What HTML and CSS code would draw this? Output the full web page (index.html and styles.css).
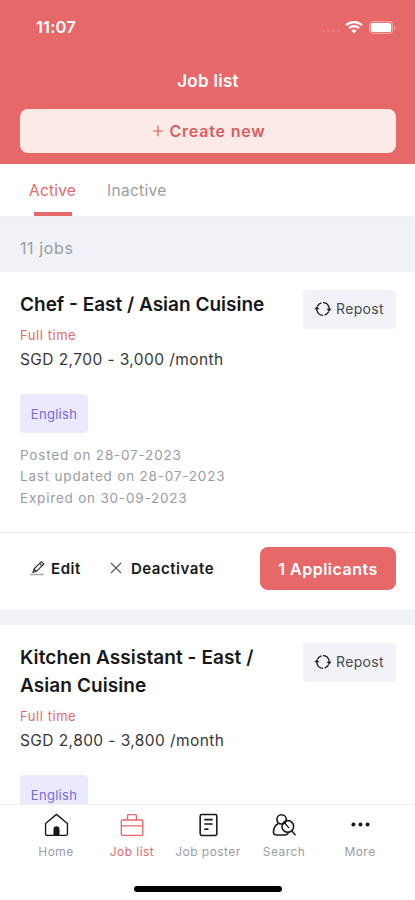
FILE: index.html
```
<!DOCTYPE html>
<html lang="en">
<head>
<meta charset="utf-8">
<meta name="viewport" content="width=device-width, initial-scale=1">
<title>Job list</title>
<link rel="stylesheet" href="styles.css">
</head>
<body>
<svg class="sprite" aria-hidden="true">
  <symbol id="repost" viewBox="0 0 18 18">
    <path d="M3.3 6.6A6.2 6.2 0 0 1 7.4 2.9M9 2.7A6.3 6.3 0 0 1 15 7.4L15.2 9M14.7 11.4A6.2 6.2 0 0 1 10.6 15.1M9 15.3A6.3 6.3 0 0 1 3 10.6L2.8 9" fill="none" stroke="currentColor" stroke-width="1.3"/>
    <path d="M.4 9.2L2.8 6.6L5.6 9.2ZM12.4 8.8H17.6L15.2 11.4Z" fill="currentColor"/>
  </symbol>
</svg>
<div class="screen">
  <header class="header">
    <div class="status">
      <span class="time">11:07</span>
      <span class="signals">
        <svg class="dots" viewBox="0 0 20 4"><path d="M1 2h3M6 2h3M11 2h3M16 2h3" stroke="#ee908e" stroke-width="1.2"/></svg>
        <svg class="wifi" viewBox="0 0 18 14"><path d="M1.2 5.2A11.2 11.2 0 0 1 16.8 5.2M4 8.2A7.2 7.2 0 0 1 14 8.2" fill="none" stroke="#fff" stroke-width="2.3"/><path d="M6.4 10.7A3.8 3.8 0 0 1 11.6 10.7L9 13.4Z" fill="#fff"/></svg>
        <svg class="battery" viewBox="0 0 27 13"><rect x=".6" y=".6" width="23" height="11.8" rx="3.4" fill="none" stroke="#f2a5a4" stroke-width="1.1"/><rect x="1.8" y="1.9" width="20.4" height="9.2" rx="1.8" fill="#fff"/><path d="M25 4.5Q26.5 5 26.5 6.5T25 8.5Z" fill="#f2a5a4"/></svg>
      </span>
    </div>
    <h1 class="title">Job list</h1>
    <button class="create"><svg viewBox="0 0 12 12"><path d="M6 .8V11.2M.8 6H11.2" stroke="currentColor" stroke-width="1.2"/></svg><span>Create new</span></button>
  </header>
  <nav class="tabs"><a class="tab tab-active">Active</a><a class="tab">Inactive</a></nav>
  <div class="count"><span>11 jobs</span></div>
  <main class="jobs">
    <article class="card">
      <div class="card-body">
        <div class="card-head">
          <h2 class="job-title"><span>Chef - East / Asian Cuisine</span></h2>
          <button class="repost"><svg><use href="#repost"/></svg><span>Repost</span></button>
        </div>
        <div class="type"><span>Full time</span></div>
        <div class="salary"><span>SGD 2,700 - 3,000 /month</span></div>
        <div class="tag"><span>English</span></div>
        <div class="dates">
          <div><span>Posted on 28-07-2023</span></div>
          <div><span>Last updated on 28-07-2023</span></div>
          <div><span>Expired on 30-09-2023</span></div>
        </div>
      </div>
      <footer class="actions">
        <button class="action edit"><svg viewBox="0 0 16 16"><path d="M2.8 12.6L4 9L11.4 1.6L13.8 4L6.4 11.4ZM9.6 3.4L12 5.8M4 9L6.4 11.4" fill="none" stroke="#333" stroke-width="1.1" stroke-linejoin="round"/><path d="M.2 14.5H13.6" stroke="#aaa" stroke-width="1.6"/></svg><span>Edit</span></button>
        <button class="action deactivate"><svg viewBox="0 0 12 12"><path d="M1 1L11 11M11 1L1 11" stroke="#555" stroke-width="1.1"/></svg><span>Deactivate</span></button>
        <button class="applicants"><span>1 Applicants</span></button>
      </footer>
    </article>
    <article class="card">
      <div class="card-body">
        <div class="card-head">
          <h2 class="job-title title-wide"><span>Kitchen Assistant - East /<br>Asian Cuisine</span></h2>
          <button class="repost"><svg><use href="#repost"/></svg><span>Repost</span></button>
        </div>
        <div class="type"><span>Full time</span></div>
        <div class="salary"><span>SGD 2,800 - 3,800 /month</span></div>
        <div class="tag"><span>English</span></div>
      </div>
    </article>
  </main>
  <footer class="bottom">
    <nav class="nav">
      <a class="nav-item"><svg viewBox="0 0 24 24"><path d="M1.5 10.5L12 1.8L22.5 10.5V20.5Q22.5 22 21 22H3Q1.5 22 1.5 20.5Z" fill="none" stroke="currentColor" stroke-width="1.3" stroke-linejoin="round"/><path d="M9.6 22V16.2A2.4 2.4 0 0 1 14.4 16.2V22Z" fill="currentColor" stroke="currentColor"/></svg><span>Home</span></a>
      <a class="nav-item nav-active"><svg viewBox="0 0 24 24"><path d="M2.4 7.2H20.8Q21.9 7.2 21.9 8.3V20.9Q21.9 22 20.8 22H2.4Q1.3 22 1.3 20.9V8.3Q1.3 7.2 2.4 7.2ZM1.3 12.8H21.9M7.2 7.2V3.2Q7.2 2.1 8.3 2.1H14.7Q15.8 2.1 15.8 3.2V7.2" fill="none" stroke="currentColor" stroke-width="1.3"/></svg><span>Job list</span></a>
      <a class="nav-item"><svg viewBox="0 0 24 24"><rect x="4" y="2" width="16" height="20" rx="1.5" fill="none" stroke="currentColor" stroke-width="1.5"/><path d="M8 6.8H16M8 11H16" stroke="currentColor" stroke-width="1.6"/><path d="M8 16H12" stroke="currentColor" stroke-width="1.6"/></svg><span>Job poster</span></a>
      <a class="nav-item"><svg viewBox="0 0 24 24"><circle cx="9.2" cy="6.6" r="4.5" fill="none" stroke="currentColor" stroke-width="1.5"/><path d="M6.2 10.5Q1.4 13 1.4 18.5V19.5Q1.8 21.5 4.4 21.6H12.4Q14.4 21.6 15.8 20" fill="none" stroke="currentColor" stroke-width="1.5"/><circle cx="15.2" cy="13.4" r="5.6" fill="none" stroke="currentColor" stroke-width="1.5"/><path d="M18.8 17.5L22.6 21.8M11.6 9.4L16.4 15" stroke="currentColor" stroke-width="1.3"/></svg><span>Search</span></a>
      <a class="nav-item"><svg viewBox="0 0 24 24"><circle cx="5.2" cy="11.6" r="1.9" fill="currentColor"/><circle cx="12" cy="11.6" r="1.9" fill="currentColor"/><circle cx="18.8" cy="11.6" r="1.9" fill="currentColor"/></svg><span>More</span></a>
    </nav>
    <div class="indicator"></div>
  </footer>
</div>
</body>
</html>
```
FILE: styles.css
```
* { box-sizing: border-box; }
body { margin: 0; font-family: Inter, "Liberation Sans", sans-serif; color: #17181b; background: #fff; }
button { font: inherit; color: inherit; border: 0; margin: 0; padding: 0; display: flex; align-items: center; }
svg { display: block; flex: none; }
h1, h2 { margin: 0; }
.sprite { display: none; }
.screen { width: 415px; height: 900px; display: flex; flex-direction: column; overflow: hidden; }
.header { height: 164px; flex: none; background: #e76868; color: #fff; padding: 0 19px 0 20px; }
.status { height: 54px; display: flex; justify-content: space-between; padding-left: 16px; }
.time { font-size: 16.5px; font-weight: 600; line-height: 54px; letter-spacing: .1px; }
.signals { display: flex; height: 54px; align-items: center; }
.dots { width: 20px; height: 4px; margin: 7px 4px 0 0; }
.wifi { width: 18px; height: 14px; margin-right: 6px; }
.battery { width: 27px; height: 13px; }
.title { height: 55px; line-height: 54px; font-size: 17px; font-weight: 600; text-align: center; letter-spacing: .3px; }
.create { width: 100%; height: 44px; border-radius: 8px; background: #fceae7; color: #dc5b60; justify-content: center; gap: 5px; font-size: 16px; font-weight: 600; letter-spacing: .8px; padding-left: 2px; }
.create svg { width: 12px; height: 12px; }
.tabs { height: 53px; flex: none; display: flex; gap: 31px; padding-left: 29px; border-bottom: 1px solid #ebecf0; }
.tab { display: flex; flex-direction: column; align-items: center; font-size: 15.5px; line-height: 53px; letter-spacing: .3px; color: #999ca1; }
.tab-active { color: #e76868; letter-spacing: .2px; }
.tab-active::after { content: ""; width: 38px; height: 5px; margin-top: -5px; background: #e76868; }
.count { height: 55px; flex: none; background: #f0f2f7; padding-left: 20px; font-size: 16px; line-height: 62px; letter-spacing: .6px; color: #999ca1; }
.jobs { flex: 1; min-height: 0; overflow: hidden; background: #f0f2f7; display: flex; flex-direction: column; gap: 16px; }
.card { background: #fff; flex: none; }
.card-body { padding: 18px 19px 23px 20px; }
.card-head { display: flex; justify-content: space-between; align-items: flex-start; }
.job-title { margin-top: 1px; font-size: 19px; line-height: 28px; font-weight: 600; white-space: nowrap; }
.title-wide { letter-spacing: .08px; }
.repost { width: 93px; height: 39px; margin-bottom: -11px; border-radius: 4px; background: #f1f3f8; color: #4a4b50; gap: 4px; padding-left: 11px; font-size: 14px; letter-spacing: .35px; line-height: 18px; padding-bottom: 1px; }
.repost svg { width: 18px; height: 18px; color: #17181b; }
.type { margin-top: 6px; font-size: 13px; line-height: 20px; letter-spacing: .55px; color: #e76868; }
.salary { margin-top: 3px; font-size: 15.5px; line-height: 24px; letter-spacing: .42px; color: #36373b; }
.tag { width: 68px; height: 39px; margin-top: 22px; border-radius: 4px; background: #ebe9fc; color: #766be0; font-size: 13px; line-height: 40px; text-align: center; letter-spacing: .3px; }
.dates { margin-top: 12px; font-size: 13.5px; line-height: 21.3px; letter-spacing: .8px; color: #999da3; }
.actions { height: 77px; border-top: 1px solid #eeeff2; display: flex; align-items: center; padding: 0 19px 4px 30px; }
.action { background: transparent; font-size: 15px; font-weight: 600; letter-spacing: .55px; padding-bottom: 1px; }
.edit { gap: 5px; }
.edit svg { width: 16px; height: 16px; }
.deactivate { margin-left: 29px; gap: 9px; }
.deactivate svg { width: 12px; height: 12px; }
.applicants { margin-left: auto; width: 136px; height: 43px; border-radius: 8px; background: #e76868; color: #fff; justify-content: center; font-size: 16px; font-weight: 600; letter-spacing: .5px; }
.bottom { height: 96px; flex: none; background: #fff; border-top: 1px solid #f0f1f4; display: flex; flex-direction: column; align-items: center; justify-content: space-between; padding-bottom: 8px; }
.nav { display: grid; grid-template-columns: repeat(5, 76px); padding: 7px 0 0 1px; }
.nav-item { display: flex; flex-direction: column; align-items: center; color: #17181b; font-size: 12px; line-height: 20px; letter-spacing: .45px; white-space: nowrap; }
.nav-item svg { width: 25px; height: 26px; margin-bottom: 4px; }
.nav-item span { color: #9a9da5; }
.nav-item.nav-active, .nav-active span { color: #e76868; }
.indicator { width: 148px; height: 6px; border-radius: 3px; background: #000; }
```
